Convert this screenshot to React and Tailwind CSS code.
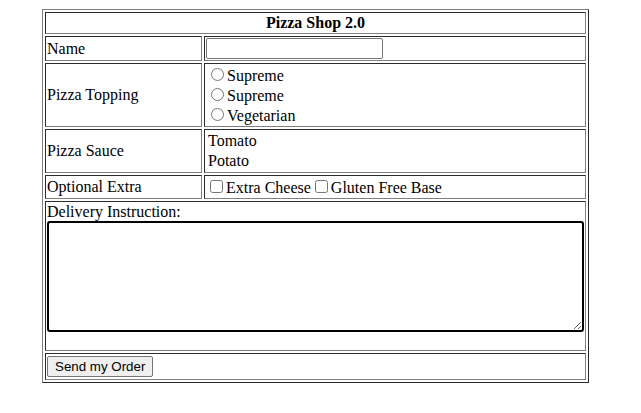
export default function App() {
  const cell = "[border:1px_inset_#808080] p-px";

  return (
    <div className="min-h-[413px] bg-white pl-[42px] pt-[9px]">
      <table className="w-[547px] border-separate border-spacing-[2px] [border:1px_outset_#808080] font-['Liberation_Serif',serif] text-[16px] leading-[normal] text-black">
        <tbody>
          {/* Title */}
          <tr>
            <th colSpan={2} className={`${cell} text-center font-bold`}>
              Pizza Shop 2.0
            </th>
          </tr>

          <tr>
            <td className={`${cell} w-[157px]`}>Name</td>
            <td className={cell}>
              <input
                type="text"
                className="h-[21px] w-[177px] rounded-[2px] border border-[#767676] bg-white px-[2px] py-px align-middle font-['Liberation_Sans',sans-serif] text-[13.33px]"
              />
            </td>
          </tr>

          <tr>
            <td className={cell}>Pizza Topping</td>
            <td className={cell}>
              <label className="block">
                <input type="radio" name="topping" className="m-[3px_3px_0_5px]" />
                Supreme
              </label>
              <label className="block">
                <input type="radio" name="topping" className="m-[3px_3px_0_5px]" />
                Supreme
              </label>
              <label className="block">
                <input type="radio" name="topping" className="m-[3px_3px_0_5px]" />
                Vegetarian
              </label>
            </td>
          </tr>

          <tr>
            <td className={cell}>Pizza Sauce</td>
            <td className={`${cell} pl-[3px]`}>
              <div className="leading-[20px]">Tomato</div>
              <div className="leading-[20px]">Potato</div>
            </td>
          </tr>

          <tr>
            <td className={cell}>Optional Extra</td>
            <td className={cell}>
              <input type="checkbox" className="m-[3px_3px_3px_4px]" />
              Extra Cheese
              <input type="checkbox" className="m-[3px_3px_3px_4px]" />
              Gluten Free Base
            </td>
          </tr>

          {/* Delivery */}
          <tr>
            <td colSpan={2} className={cell}>
              <div>Delivery Instruction:</div>
              <textarea className="mb-[17px] block h-[111px] w-full rounded-[3px] border-2 border-black bg-white" />
            </td>
          </tr>

          <tr>
            <td colSpan={2} className={`${cell} py-[2px]`}>
              <button className="block h-[21px] rounded-[2px] border border-[#767676] bg-[#efefef] px-[7px] font-['Liberation_Sans',sans-serif] text-[13.33px] leading-none text-black">
                Send my Order
              </button>
            </td>
          </tr>
        </tbody>
      </table>
    </div>
  );
}
